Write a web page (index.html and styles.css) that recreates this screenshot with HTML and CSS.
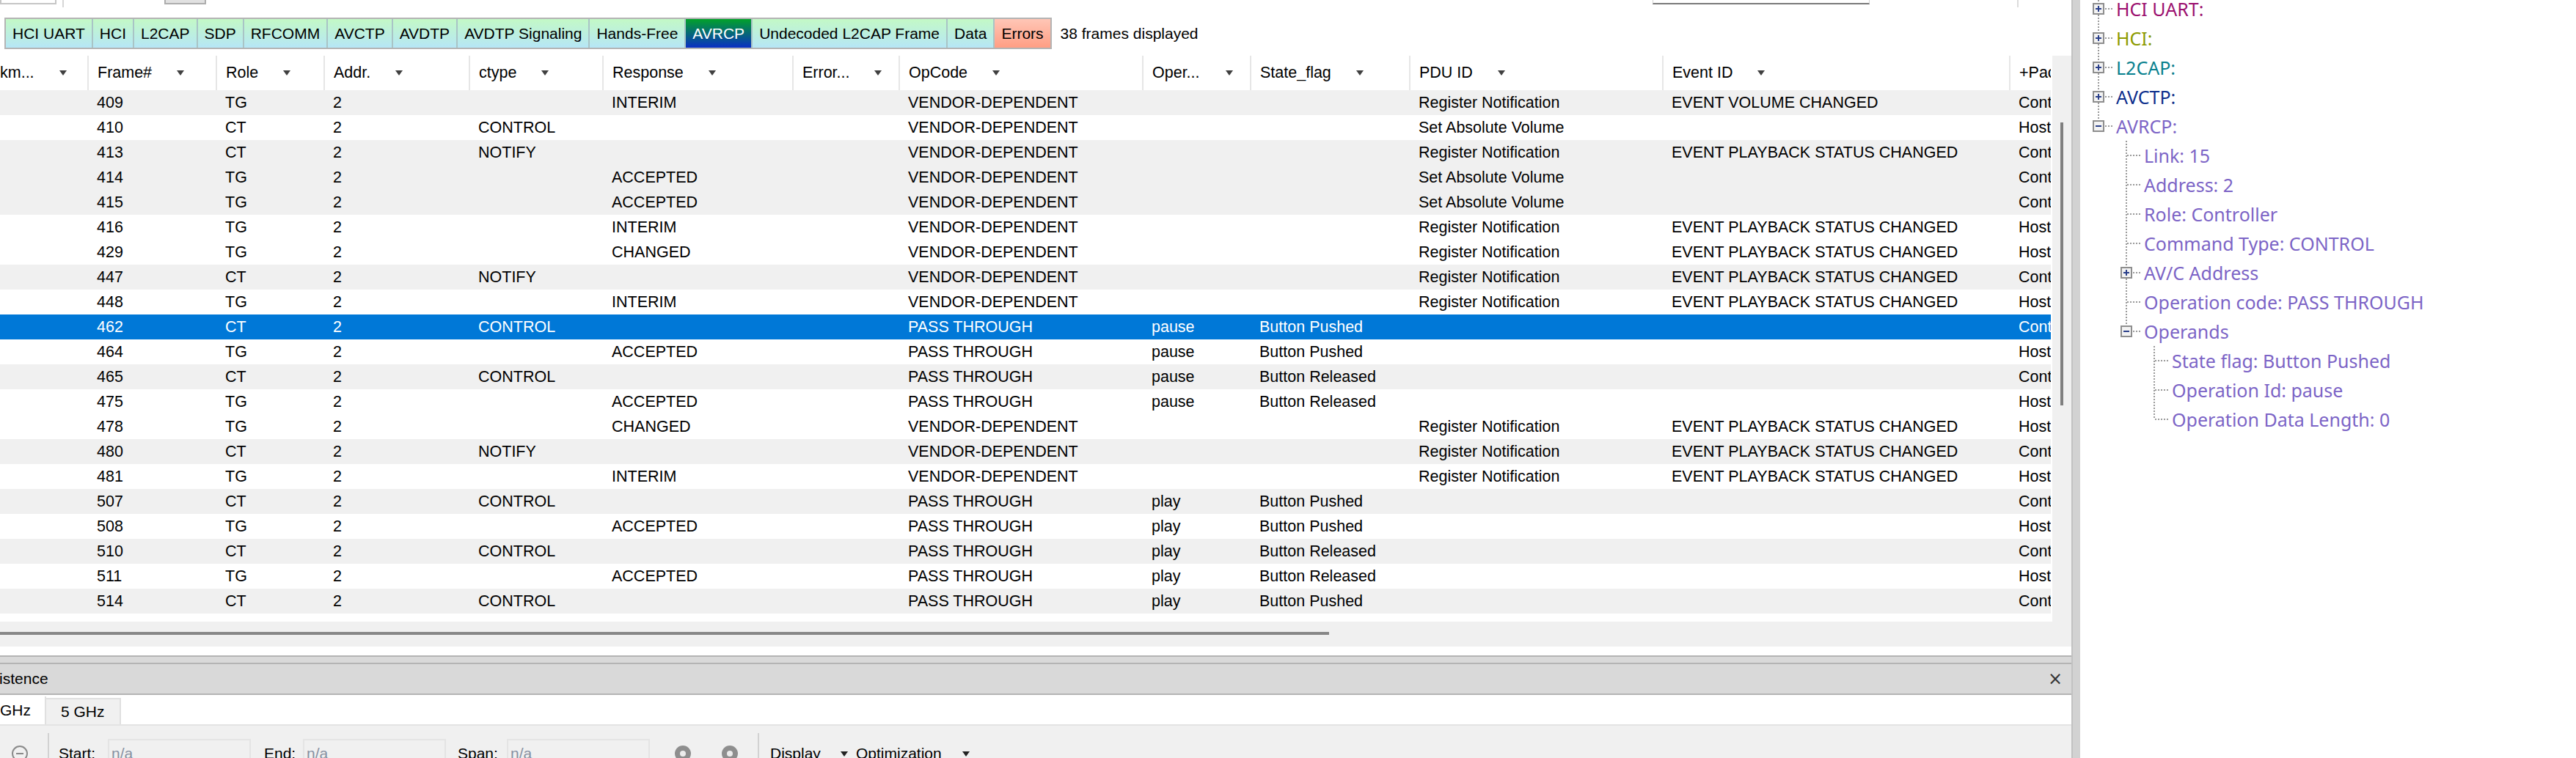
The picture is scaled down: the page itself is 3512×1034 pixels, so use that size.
FILE: index.html
```html
<!DOCTYPE html>
<html>
<head>
<meta charset="utf-8">
<title>AVRCP frames</title>
<link rel="stylesheet" href="styles.css">
</head>
<body>
<div class="app">
  <div class="left">
    <div class="topbar">
      <div class="tb-box"></div>
      <div class="tb-vline"></div>
      <div class="tb-btn"></div>
      <div class="tb-input"></div>
      <div class="tb-vline2"></div>
    </div>
    <div class="filters">
      <div class="tabs">
        <span class="tab">HCI UART</span>
        <span class="tab">HCI</span>
        <span class="tab">L2CAP</span>
        <span class="tab">SDP</span>
        <span class="tab">RFCOMM</span>
        <span class="tab">AVCTP</span>
        <span class="tab">AVDTP</span>
        <span class="tab">AVDTP Signaling</span>
        <span class="tab">Hands-Free</span>
        <span class="tab active">AVRCP</span>
        <span class="tab">Undecoded L2CAP Frame</span>
        <span class="tab">Data</span>
        <span class="tab err">Errors</span>
      </div>
      <span class="count">38 frames displayed</span>
    </div>
    <div class="grid-area">
      <div class="table">
        <div class="thead">
          <div class="th">km...<i class="dd"></i></div>
          <div class="th">Frame#<i class="dd"></i></div>
          <div class="th">Role<i class="dd"></i></div>
          <div class="th">Addr.<i class="dd"></i></div>
          <div class="th">ctype<i class="dd"></i></div>
          <div class="th">Response<i class="dd"></i></div>
          <div class="th trunc">Error...<i class="dd"></i></div>
          <div class="th">OpCode<i class="dd"></i></div>
          <div class="th trunc">Oper...<i class="dd"></i></div>
          <div class="th">State_flag<i class="dd"></i></div>
          <div class="th">PDU ID<i class="dd"></i></div>
          <div class="th">Event ID<i class="dd"></i></div>
          <div class="th">+Packet</div>
        </div>
        <div class="tbody">
          <div class="r alt"><span></span><span>409</span><span>TG</span><span>2</span><span></span><span>INTERIM</span><span></span><span>VENDOR-DEPENDENT</span><span></span><span></span><span>Register Notification</span><span>EVENT VOLUME CHANGED</span><span>Controller</span></div>
          <div class="r"><span></span><span>410</span><span>CT</span><span>2</span><span>CONTROL</span><span></span><span></span><span>VENDOR-DEPENDENT</span><span></span><span></span><span>Set Absolute Volume</span><span></span><span>Host</span></div>
          <div class="r alt"><span></span><span>413</span><span>CT</span><span>2</span><span>NOTIFY</span><span></span><span></span><span>VENDOR-DEPENDENT</span><span></span><span></span><span>Register Notification</span><span>EVENT PLAYBACK STATUS CHANGED</span><span>Controller</span></div>
          <div class="r alt"><span></span><span>414</span><span>TG</span><span>2</span><span></span><span>ACCEPTED</span><span></span><span>VENDOR-DEPENDENT</span><span></span><span></span><span>Set Absolute Volume</span><span></span><span>Controller</span></div>
          <div class="r alt"><span></span><span>415</span><span>TG</span><span>2</span><span></span><span>ACCEPTED</span><span></span><span>VENDOR-DEPENDENT</span><span></span><span></span><span>Set Absolute Volume</span><span></span><span>Controller</span></div>
          <div class="r"><span></span><span>416</span><span>TG</span><span>2</span><span></span><span>INTERIM</span><span></span><span>VENDOR-DEPENDENT</span><span></span><span></span><span>Register Notification</span><span>EVENT PLAYBACK STATUS CHANGED</span><span>Host</span></div>
          <div class="r"><span></span><span>429</span><span>TG</span><span>2</span><span></span><span>CHANGED</span><span></span><span>VENDOR-DEPENDENT</span><span></span><span></span><span>Register Notification</span><span>EVENT PLAYBACK STATUS CHANGED</span><span>Host</span></div>
          <div class="r alt"><span></span><span>447</span><span>CT</span><span>2</span><span>NOTIFY</span><span></span><span></span><span>VENDOR-DEPENDENT</span><span></span><span></span><span>Register Notification</span><span>EVENT PLAYBACK STATUS CHANGED</span><span>Controller</span></div>
          <div class="r"><span></span><span>448</span><span>TG</span><span>2</span><span></span><span>INTERIM</span><span></span><span>VENDOR-DEPENDENT</span><span></span><span></span><span>Register Notification</span><span>EVENT PLAYBACK STATUS CHANGED</span><span>Host</span></div>
          <div class="r sel"><span></span><span>462</span><span>CT</span><span>2</span><span>CONTROL</span><span></span><span></span><span>PASS THROUGH</span><span>pause</span><span>Button Pushed</span><span></span><span></span><span>Controller</span></div>
          <div class="r"><span></span><span>464</span><span>TG</span><span>2</span><span></span><span>ACCEPTED</span><span></span><span>PASS THROUGH</span><span>pause</span><span>Button Pushed</span><span></span><span></span><span>Host</span></div>
          <div class="r alt"><span></span><span>465</span><span>CT</span><span>2</span><span>CONTROL</span><span></span><span></span><span>PASS THROUGH</span><span>pause</span><span>Button Released</span><span></span><span></span><span>Controller</span></div>
          <div class="r"><span></span><span>475</span><span>TG</span><span>2</span><span></span><span>ACCEPTED</span><span></span><span>PASS THROUGH</span><span>pause</span><span>Button Released</span><span></span><span></span><span>Host</span></div>
          <div class="r"><span></span><span>478</span><span>TG</span><span>2</span><span></span><span>CHANGED</span><span></span><span>VENDOR-DEPENDENT</span><span></span><span></span><span>Register Notification</span><span>EVENT PLAYBACK STATUS CHANGED</span><span>Host</span></div>
          <div class="r alt"><span></span><span>480</span><span>CT</span><span>2</span><span>NOTIFY</span><span></span><span></span><span>VENDOR-DEPENDENT</span><span></span><span></span><span>Register Notification</span><span>EVENT PLAYBACK STATUS CHANGED</span><span>Controller</span></div>
          <div class="r"><span></span><span>481</span><span>TG</span><span>2</span><span></span><span>INTERIM</span><span></span><span>VENDOR-DEPENDENT</span><span></span><span></span><span>Register Notification</span><span>EVENT PLAYBACK STATUS CHANGED</span><span>Host</span></div>
          <div class="r alt"><span></span><span>507</span><span>CT</span><span>2</span><span>CONTROL</span><span></span><span></span><span>PASS THROUGH</span><span>play</span><span>Button Pushed</span><span></span><span></span><span>Controller</span></div>
          <div class="r"><span></span><span>508</span><span>TG</span><span>2</span><span></span><span>ACCEPTED</span><span></span><span>PASS THROUGH</span><span>play</span><span>Button Pushed</span><span></span><span></span><span>Host</span></div>
          <div class="r alt"><span></span><span>510</span><span>CT</span><span>2</span><span>CONTROL</span><span></span><span></span><span>PASS THROUGH</span><span>play</span><span>Button Released</span><span></span><span></span><span>Controller</span></div>
          <div class="r"><span></span><span>511</span><span>TG</span><span>2</span><span></span><span>ACCEPTED</span><span></span><span>PASS THROUGH</span><span>play</span><span>Button Released</span><span></span><span></span><span>Host</span></div>
          <div class="r alt"><span></span><span>514</span><span>CT</span><span>2</span><span>CONTROL</span><span></span><span></span><span>PASS THROUGH</span><span>play</span><span>Button Pushed</span><span></span><span></span><span>Controller</span></div>
        </div>
      </div>
      <div class="vscroll"><div class="vthumb"></div></div>
    </div>
    <div class="hscroll"><div class="hthumb"></div></div>
    <div class="gap"></div>
    <div class="dock">
      <div class="dock-grip"></div>
      <div class="dock-title"><span class="title-text">Coexistence</span><span class="close">×</span></div>
      <div class="dock-tabs">
        <div class="dtab active"><span>2.4 GHz</span></div>
        <div class="dtab other"><span>5 GHz</span></div>
      </div>
      <div class="toolbar">
        <svg class="zoom-out" width="24" height="24" viewBox="0 0 24 24"><circle cx="12" cy="12" r="10" fill="none" stroke="#8a8a8a" stroke-width="2"/><path d="M7 12h10" stroke="#8a8a8a" stroke-width="2"/></svg>
        <div class="tsep s1"></div>
        <span class="lbl l-start">Start:</span>
        <div class="inp">n/a</div>
        <span class="lbl l-end">End:</span>
        <div class="inp">n/a</div>
        <span class="lbl l-span">Span:</span>
        <div class="inp">n/a</div>
        <svg class="nav n1" width="22" height="22" viewBox="0 0 22 22"><circle cx="11" cy="11" r="11" fill="#8e8e8e"/><circle cx="11" cy="11" r="4" fill="#ececec"/></svg>
        <svg class="nav n2" width="22" height="22" viewBox="0 0 22 22"><circle cx="11" cy="11" r="11" fill="#8e8e8e"/><circle cx="11" cy="11" r="4" fill="#ececec"/></svg>
        <div class="tsep s2"></div>
        <span class="menu m-display">Display</span><i class="dd dm"></i>
        <span class="menu m-opt">Optimization</span><i class="dd dm"></i>
      </div>
    </div>
  </div>
  <div class="splitter"></div>
  <div class="right">
    <div class="tree">
      <div class="tn"><div class="gu both"><svg class="bx" viewBox="0 0 16 16"><rect x="1" y="1" width="14" height="14" fill="#f3f3f3" stroke="#8e8e8e" stroke-width="2"/><path d="M4 8h8M8 4v8" stroke="#2a3f8a" stroke-width="2"/></svg></div><span class="lb c-uart">HCI UART:</span></div>
      <div class="tn"><div class="gu both"><svg class="bx" viewBox="0 0 16 16"><rect x="1" y="1" width="14" height="14" fill="#f3f3f3" stroke="#8e8e8e" stroke-width="2"/><path d="M4 8h8M8 4v8" stroke="#2a3f8a" stroke-width="2"/></svg></div><span class="lb c-hci">HCI:</span></div>
      <div class="tn"><div class="gu both"><svg class="bx" viewBox="0 0 16 16"><rect x="1" y="1" width="14" height="14" fill="#f3f3f3" stroke="#8e8e8e" stroke-width="2"/><path d="M4 8h8M8 4v8" stroke="#2a3f8a" stroke-width="2"/></svg></div><span class="lb c-l2">L2CAP:</span></div>
      <div class="tn"><div class="gu both"><svg class="bx" viewBox="0 0 16 16"><rect x="1" y="1" width="14" height="14" fill="#f3f3f3" stroke="#8e8e8e" stroke-width="2"/><path d="M4 8h8M8 4v8" stroke="#2a3f8a" stroke-width="2"/></svg></div><span class="lb c-avctp">AVCTP:</span></div>
      <div class="tn"><div class="gu top"><svg class="bx" viewBox="0 0 16 16"><rect x="1" y="1" width="14" height="14" fill="#f3f3f3" stroke="#8e8e8e" stroke-width="2"/><path d="M4 8h8" stroke="#2a3f8a" stroke-width="2"/></svg></div><span class="lb c-avrcp">AVRCP:</span></div>
      <div class="tn"><div class="gu"></div><div class="gu tee"></div><span class="lb c-avrcp">Link: 15</span></div>
      <div class="tn"><div class="gu"></div><div class="gu tee"></div><span class="lb c-avrcp">Address: 2</span></div>
      <div class="tn"><div class="gu"></div><div class="gu tee"></div><span class="lb c-avrcp">Role: Controller</span></div>
      <div class="tn"><div class="gu"></div><div class="gu tee"></div><span class="lb c-avrcp">Command Type: CONTROL</span></div>
      <div class="tn"><div class="gu"></div><div class="gu both"><svg class="bx" viewBox="0 0 16 16"><rect x="1" y="1" width="14" height="14" fill="#f3f3f3" stroke="#8e8e8e" stroke-width="2"/><path d="M4 8h8M8 4v8" stroke="#2a3f8a" stroke-width="2"/></svg></div><span class="lb c-avrcp">AV/C Address</span></div>
      <div class="tn"><div class="gu"></div><div class="gu tee"></div><span class="lb c-avrcp">Operation code: PASS THROUGH</span></div>
      <div class="tn"><div class="gu"></div><div class="gu top"><svg class="bx" viewBox="0 0 16 16"><rect x="1" y="1" width="14" height="14" fill="#f3f3f3" stroke="#8e8e8e" stroke-width="2"/><path d="M4 8h8" stroke="#2a3f8a" stroke-width="2"/></svg></div><span class="lb c-avrcp">Operands</span></div>
      <div class="tn"><div class="gu"></div><div class="gu"></div><div class="gu tee"></div><span class="lb c-avrcp">State flag: Button Pushed</span></div>
      <div class="tn"><div class="gu"></div><div class="gu"></div><div class="gu tee"></div><span class="lb c-avrcp">Operation Id: pause</span></div>
      <div class="tn"><div class="gu"></div><div class="gu"></div><div class="gu ell"></div><span class="lb c-avrcp">Operation Data Length: 0</span></div>
    </div>
  </div>
</div>
</body>
</html>
```

FILE: styles.css
```css
* { box-sizing: border-box; }
html, body { margin: 0; padding: 0; }
body {
  width: 3512px;
  height: 1034px;
  overflow: hidden;
  background: #fff;
  color: #000;
  font-family: "Liberation Sans", Arial, sans-serif;
  font-size: 21.5px;
}
.app { display: flex; width: 3512px; height: 1034px; }
.left { width: 2824px; flex: none; display: flex; flex-direction: column; overflow: hidden; background: #fff; }
.splitter { width: 12px; flex: none; background: #d2d2d2; border-left: 2px solid #c2c2c2; }
.right { flex: 1; background: #fff; overflow: hidden; }

/* top strip (bottom edges of toolbar controls) */
.topbar { height: 24px; flex: none; display: flex; align-items: flex-start; }
.tb-box { width: 77px; height: 6px; background: #fff; border: 2px solid #c6c6c6; border-top: 0; }
.tb-vline { width: 2px; height: 10px; margin-left: 8px; background: #d6d6d6; }
.tb-btn { width: 57px; height: 6px; margin-left: 137px; background: #e1e1e1; border: 2px solid #adadad; border-top: 0; }
.tb-input { width: 296px; height: 6px; margin-left: 1972px; background: #fff; border: 1px solid #d4d4d4; border-top: 0; border-bottom: 2px solid #7a7a7a; }
.tb-vline2 { width: 2px; height: 10px; margin-left: 201px; background: #dcdcdc; }

/* protocol filter tabs */
.filters { height: 43px; flex: none; display: flex; align-items: stretch; margin-left: 6px; }
.tabs { display: flex; border: 2px solid #b4b4b4; }
.tab {
  display: flex; align-items: center;
  padding: 0 9px;
  font-size: 21px;
  background: linear-gradient(#c3f9c6, #b6e6f6);
  border-right: 2px solid #a9c4c6;
  white-space: nowrap;
}
.tab:last-child { border-right: 0; }
.tab.active { background: linear-gradient(#02a22a, #0a2fc4); color: #fff; }
.tab.err { background: linear-gradient(#ffc6b6, #ff9e84); }
.count { display: flex; align-items: center; margin-left: 12px; font-size: 21px; white-space: nowrap; }

/* frame grid */
.grid-area { display: flex; height: 772px; margin-top: 9px; flex: none; }
.table { width: 2796px; flex: none; overflow: hidden; background: #fff; }
.vscroll { width: 26px; margin-left: 2px; flex: none; background: #f0f0f0; }
.vthumb { width: 4px; height: 386px; margin: 91px 0 0 11px; background: #7f7f7f; }

.thead, .r {
  display: grid;
  grid-template-columns: 119px 175px 147px 198px 182px 259px 145px 332px 147px 217px 345px 473px 57px;
}
.thead { height: 47px; }
.th {
  display: flex; align-items: center;
  padding-left: 12px;
  border-left: 2px solid #e6e6e6;
  white-space: nowrap; overflow: hidden;
}
.th:first-child { border-left: 0; padding-left: 0; }
.th.trunc { justify-content: space-between; padding-right: 23px; }
.dd {
  display: inline-block; flex: none;
  width: 0; height: 0;
  border-left: 5px solid transparent;
  border-right: 5px solid transparent;
  border-top: 7px solid #404040;
  margin-left: 34px;
}
.th.trunc .dd { margin-left: 0; }
.r { height: 34px; line-height: 34px; }
.r > span { padding-left: 13px; white-space: nowrap; overflow: hidden; }
.r.alt { background: #f0f0f0; }
.r.sel { background: #0078d7; color: #fff; }

.hscroll { height: 34px; flex: none; background: #f0f0f0; padding-top: 14px; }
.hthumb { width: 1812px; height: 4px; background: #878787; }
.gap { height: 12px; flex: none; }

/* docked coexistence panel */
.dock { flex: none; display: flex; flex-direction: column; font-size: 21px; }
.dock-grip { height: 12px; background: #d9d9d9; border-top: 2px solid #b4b4b4; border-bottom: 2px solid #b4b4b4; }
.dock-title {
  height: 42px; background: #d9d9d9; border-bottom: 2px solid #b4b4b4;
  display: flex; align-items: center; justify-content: space-between;
  padding-right: 12px; white-space: nowrap;
}
.title-text { margin-left: -50px; }
.close { font-family: "DejaVu Sans", sans-serif; font-size: 24px; color: #333; }
.dock-tabs { height: 42px; display: flex; align-items: flex-end; background: #fff; border-bottom: 2px solid #e3e3e3; }
.dtab { display: flex; align-items: center; white-space: nowrap; }
.dtab.active { width: 63px; height: 38px; background: #fff; border-right: 2px solid #e0e0e0; overflow: hidden; }
.dtab.active span { margin-left: -35px; }
.dtab.other { height: 36px; padding: 0 20px; background: #f0f0f0; border-top: 2px solid #e0e0e0; border-right: 2px solid #e0e0e0; }

.toolbar { height: 76px; flex: none; display: flex; align-items: center; background: #f0f0f0; white-space: nowrap; }
.zoom-out { margin-left: 15px; flex: none; }
.tsep { width: 2px; height: 56px; background: #d2d2d2; flex: none; }
.tsep.s1 { margin-left: 26px; }
.lbl { flex: none; }
.l-start { margin-left: 13px; width: 67px; }
.l-end { margin-left: 18px; width: 53px; }
.l-span { margin-left: 16px; width: 67px; }
.inp {
  width: 195px; height: 40px; flex: none;
  border: 2px solid #e4e4e4; background: #f0f0f0;
  padding-left: 3px; line-height: 36px; color: #8791a2;
}
.nav { flex: none; }
.nav.n1 { margin-left: 34px; }
.nav.n2 { margin-left: 42px; }
.tsep.s2 { margin-left: 27px; }
.menu { flex: none; }
.m-display { margin-left: 15px; width: 96px; }
.m-opt { margin-left: 11px; width: 145px; }
.dm { margin-left: 0; border-top-color: #222; }

/* packet detail tree */
.tree {
  margin-top: -8px; padding-left: 6px;
  font-family: "Noto Sans", "Liberation Sans", sans-serif;
  font-size: 25px;
  --dv: repeating-linear-gradient(to bottom, #9a9a9a 0 2px, transparent 2px 4px);
  --dh: repeating-linear-gradient(to right, #9a9a9a 0 2px, transparent 2px 4px);
}
.tn { display: flex; height: 40px; align-items: flex-start; }
.gu { width: 38px; height: 40px; flex: none; }
.gu.both { background: var(--dh) 28px 19px / 10px 2px no-repeat, var(--dv) 18px 0 / 2px 40px no-repeat; }
.gu.top { background: var(--dh) 28px 19px / 10px 2px no-repeat, var(--dv) 18px 0 / 2px 20px no-repeat; }
.gu.tee { background: var(--dh) 20px 19px / 18px 2px no-repeat, var(--dv) 18px 0 / 2px 40px no-repeat; }
.gu.ell { background: var(--dh) 20px 19px / 18px 2px no-repeat, var(--dv) 18px 0 / 2px 20px no-repeat; }
.bx { display: block; width: 16px; height: 16px; margin: 12px 0 0 11px; }
.lb { line-height: 40px; margin-left: 5px; white-space: nowrap; }
.c-uart { color: #9b0f6e; }
.c-hci { color: #8c9a00; }
.c-l2 { color: #08808e; }
.c-avctp { color: #0c2e8c; }
.c-avrcp { color: #7c64c6; }
```
